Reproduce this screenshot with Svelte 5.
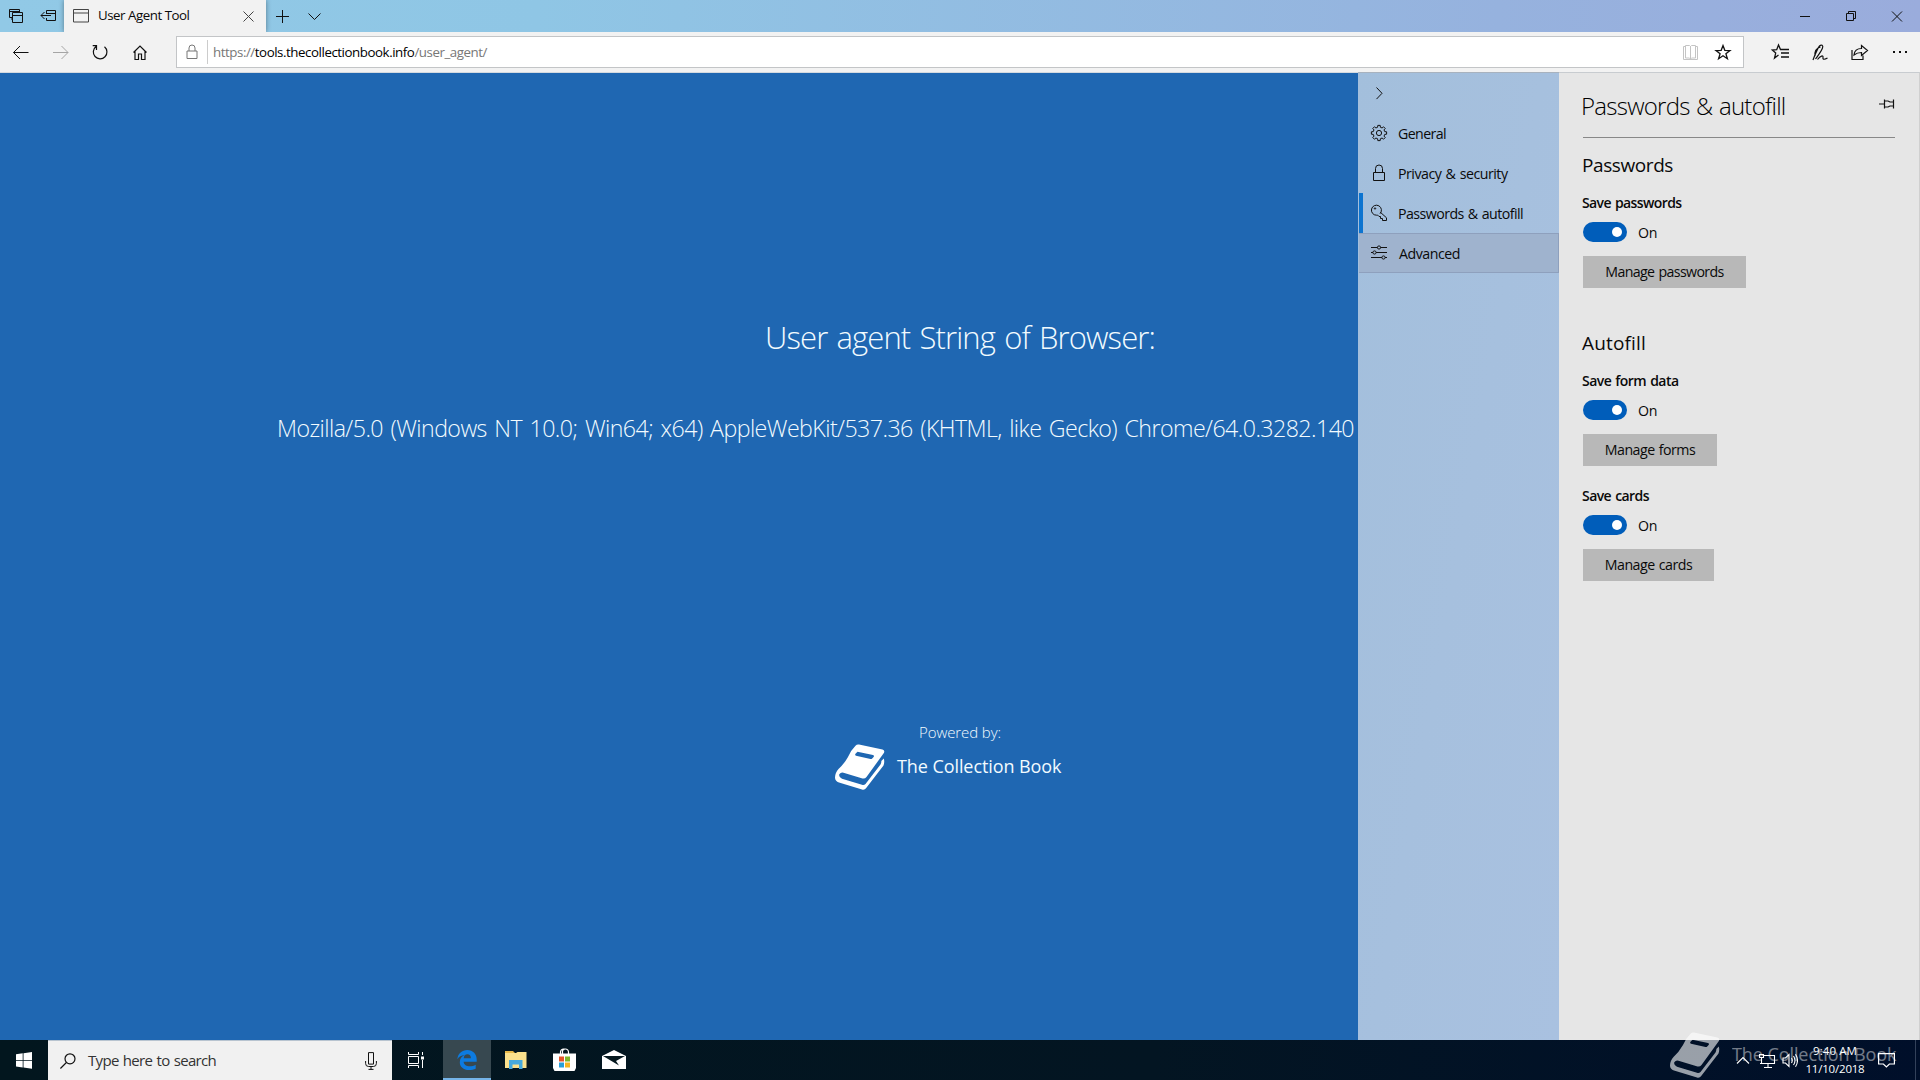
<script>
  // Spreads a label's letters so that it takes up a given advance width.
  function fit(node, width) {
    const natural = node.getBoundingClientRect().width;
    const count = Math.max(node.textContent.length, 1);
    node.style.letterSpacing = (width - natural) / count + 'px';
  }

  // Outline of a cog: teeth alternating between two radii.
  function cog(cx, cy, inner, outer, teeth) {
    const points = [];
    const step = (Math.PI * 2) / teeth;
    for (let i = 0; i < teeth; i++) {
      const a = i * step;
      for (const [offset, r] of [[-0.3, inner], [-0.2, outer], [0.2, outer], [0.3, inner]]) {
        const t = a + offset * step;
        points.push((cx + r * Math.cos(t)).toFixed(2) + ' ' + (cy + r * Math.sin(t)).toFixed(2));
      }
    }
    return 'M' + points.join('L') + 'Z';
  }
  const gear = cog(10, 10, 5.9, 7.7, 8);

  const nav = [
    { id: 'general', label: 'General', w: 48 },
    { id: 'privacy', label: 'Privacy & security', w: 109.5 },
    { id: 'passwords', label: 'Passwords & autofill', w: 125 },
    { id: 'advanced', label: 'Advanced', w: 61 }
  ];

  const settings = [
    { title: 'Passwords', tw: 91, items: [
      { label: 'Save passwords', lw: 99.5, button: 'Manage passwords', bw: 118.5, width: 'w1' }
    ] },
    { title: 'Autofill', tw: 64, items: [
      { label: 'Save form data', lw: 96.5, button: 'Manage forms', bw: 90.5, width: 'w2' },
      { label: 'Save cards', lw: 67, button: 'Manage cards', bw: 87.5, width: 'w3' }
    ] }
  ];
</script>

{#snippet book()}
  <svg class="book" viewBox="0 0 50 46">
    <path fill-rule="evenodd" d="M24 0.5 Q22 0 20.500 1.700 Q16 6 13 13 Q9 20 3.500 25 Q0 29 0 33.500 Q0 37 4 38.500 L27 45.500 Q29.500 46.300 31.200 44 L48.500 21.500 Q49.800 18 48.800 14.500 L46.300 17 Q46.500 18.500 45.500 20.500 L30.500 40 Q29 41.500 27 40.800 L7 34.700 Q3.500 33.500 4.300 30.200 Q6 28 8.500 28.800 L27.500 34.500 Q30 35 31.500 33 L48.500 9.500 Q50.500 6.500 47.500 5.500 Z M22.500 7.700 L38 11 Q39.600 11.500 38.600 12.900 L37.200 14.500 Q36.500 15.300 35.500 15 L21 11.800 Q19.600 11.200 20.500 9.800 Z" />
  </svg>
{/snippet}

<div class="screen">
  <header class="tabs">
    <svg width="64" height="32" viewBox="0 0 64 32" class="ln"><path d="M9.500 9.500h10v8h-10zM9.500 11.500h10M12 17.500v2.500h1" /><path class="front" d="M12.500 12.500h10v10h-10zM12.500 15.500h10" /><path d="M46.500 14v-3.500h9v10h-9v-2.500M46.500 13.500h9M41 15.500h10M44.500 12l-3.500 3.500 3.500 3.500" /></svg>
    <div class="tab">
      <svg width="16" height="14" viewBox="0 0 16 14" class="ln dim"><path d="M.5.500h15v12.500h-15zM.5 4h15" /></svg>
      <span class="t14" use:fit={91.5}>User Agent Tool</span>
      <svg width="11" height="11" viewBox="0 0 11 11" class="ln dim"><path d="M.5.500l10 10M10.500.500l-10 10" /></svg>
    </div>
    <svg width="60" height="32" viewBox="0 0 60 32" class="ln"><path d="M10 16.500h13M16.500 10v13M42.500 13.500l6 6 6-6" /></svg>
    <svg width="120" height="32" viewBox="0 0 120 32" class="ln windowbtns"><path d="M0 16.500h10M46.500 13.500h7v7h-7zM48.500 13.500v-2h7v7h-2M92 11.500l10 10M102 11.500l-10 10" /></svg>
  </header>

  <div class="toolbar">
    <svg width="176" height="40" viewBox="0 0 176 40" class="ln">
      <path d="M13.500 20.500h15M20 14l-6.500 6.500 6.500 6.500" />
      <path stroke="#a5a5a5" d="M53 20.500h15M61.500 14l6.500 6.500-6.500 6.500" />
      <path stroke-width="1.200" d="M96 14.600a6.800 6.800 0 1 0 8.500.2M96.500 18v-4.300h-3.800" />
      <path stroke-width="1.200" d="M133.500 20.500l6.500-6.500 6.500 6.500M135 19.500v8h3.500v-5.500h3v5.500h3.500v-8" />
    </svg>
    <div class="address">
      <svg width="12" height="16" viewBox="0 0 12 16" class="ln lock"><path d="M1 7h10v7.500h-10zM3 7v-3a3 3 0 0 1 6 0v3" /></svg>
      <i></i>
      <span class="url t14" use:fit={274}>https://<b>tools.thecollectionbook.info</b>/user_agent/</span>
      <svg width="60" height="30" viewBox="0 0 60 30" class="ln tools">
        <path stroke="#c4c4c4" d="M9.500 9.500h-2v13h14v-13h-2M9.500 8.500h4l1 1 1-1h4v12.500h-4l-1 1-1-1h-4zM14.500 9v13" />
        <path stroke-width="1.300" d="M47 8.500l1.800 4.800 5.200.2-4.100 3.200 1.500 5-4.400-3-4.400 3 1.500-5-4.100-3.200 5.200-.2z" />
      </svg>
    </div>
    <svg width="176" height="40" viewBox="0 0 176 40" class="ln">
      <path stroke-width="1.300" d="M39.500 17.500h-3l-2-4.500-1.800 4.700-4.400.4 3.400 3-1.200 5 4-3M37 21h8M37 25h8M39 17.500h6" />
      <path stroke-width="1.200" d="M69 28c2-5 4-11 6.500-14 2-2 4-.5 3 2-1.500 4-4.500 7.500-7 11M76.500 15c-4 1-6 4-5.500 9M73.500 27.500c3-4 6-4.500 5.500-2s2 2 4.500.500" />
      <path stroke-width="1.200" d="M108 18v9.500h11v-4M110 23c.5-5 4-6.500 7.500-6.500v-3l6 5-6 5v-3c-3 0-5 .5-7.500 2.500z" />
      <path stroke-width="2" d="M149 20h2M155 20h2M161 20h2" />
    </svg>
  </div>

  <main>
    <section class="page">
      <h1 use:fit={390}>User agent String of Browser:</h1>
      <p class="ua"><span use:fit={1077}>Mozilla/5.0 (Windows NT 10.0; Win64; x64) AppleWebKit/537.36 (KHTML, like Gecko) Chrome/64.0.3282.140</span></p>
      <p class="powered"><span use:fit={82}>Powered by:</span></p>
      <div class="brand">{@render book()}<span use:fit={164.5}>The Collection Book</span></div>
    </section>

    <nav>
      <div class="row"><svg width="20" height="20" viewBox="0 0 20 20" class="ln"><path d="M7.500 4.500l5.500 5.800-5.500 5.800" /></svg></div>
      {#each nav as n}
        <div class="row {n.id}">
          <svg width="20" height="20" viewBox="0 0 20 20" class="ln">
            {#if n.id === 'general'}
              <circle cx="10" cy="10" r="2.600" /><path d={gear} />
            {:else if n.id === 'privacy'}
              <path d="M4.500 9.500h11v8h-11zM6.500 9.500v-4a3.500 3.500 0 0 1 7 0v4" />
            {:else if n.id === 'passwords'}
              <circle cx="6" cy="5.500" r=".7" /><path d="M11 10.700a5 5 0 1 0-3.500 1.500l1-.2 1.500 1.500h1.500v2h2v2h4v-2.700l-6.200-5.600" />
            {:else}
              <path d="M2 4.500h6.500M11.500 4.500h6.500M2 9.500h2M7 9.500h11M2 14.500h11M16 14.500h2" /><circle cx="10" cy="4.500" r="1.600" /><circle cx="5.500" cy="9.500" r="1.600" /><circle cx="14.500" cy="14.500" r="1.600" />
            {/if}
          </svg>
          <span use:fit={n.w}>{n.label}</span>
        </div>
      {/each}
    </nav>

    <aside>
      <div class="title">
        <h2 use:fit={204.5}>Passwords &amp; autofill</h2>
        <svg width="16" height="12" viewBox="0 0 16 12" class="ln"><path stroke-width="1.200" d="M0 6h5M5.500 1.500v9M5.500 3h3.500l2 1h3.500M5.500 9h3.500l2-1h3.500M14.500 1.500v9" /></svg>
      </div>
      {#each settings as group}
        <div class="group">
          <h3 use:fit={group.tw}>{group.title}</h3>
          {#each group.items as item}
            <div class="item">
              <strong use:fit={item.lw}>{item.label}</strong>
              <div class="switch"><div class="toggle"></div><span use:fit={19}>On</span></div>
              <button class={item.width}><span use:fit={item.bw}>{item.button}</span></button>
            </div>
          {/each}
        </div>
      {/each}
    </aside>
  </main>

  <footer>
    <div class="start"><svg width="16" height="17" viewBox="0 0 16 17"><path fill="#fff" d="M0 2.300l6.700-1v6.700h-6.700zM7.500 1.200l8.500-1.200v8h-8.500zM0 8.800h6.700v6.700l-6.700-1zM7.500 8.800h8.500v8l-8.500-1.200z" /></svg></div>
    <div class="search">
      <svg width="16" height="16" viewBox="0 0 16 16" class="ln"><circle cx="10" cy="5.800" r="5" stroke-width="1.200" /><path stroke-width="1.200" d="M6.400 9.500l-6 6" /></svg>
      <span use:fit={128}>Type here to search</span>
      <svg width="12" height="18" viewBox="0 0 12 18" class="ln mic"><path d="M3.500.600h5v11.500h-5zM.6 9v2.500a3 3 0 0 0 3 3h4.800a3 3 0 0 0 3-3v-2.500M6 14.500v3M3.500 17.400h5" /></svg>
    </div>
    <div class="app tasks"><svg width="16" height="16" viewBox="0 0 16 16" class="ln white"><path d="M.5 0v2.500h10v-2.500M.5 4.500h10v7h-10zM.5 16v-2.500h10v2.500M14.500 0v3M14.500 8v8" /><path stroke-width="3" d="M14.500 4.500v3" /></svg></div>
    <div class="app active"><svg width="20" height="20" viewBox="0 0 20 20"><path fill="#0d7be0" d="M.3 9.200C1 3.500 5 0 10.200 0c6 0 9.500 4.300 9.500 9.500v2.200H6.600c.2 3.100 3 4.600 6.200 4.600 2 0 4.300-.6 5.900-1.600v4c-1.700.9-4.300 1.300-6.700 1.300-5.500 0-9.200-3.200-9.200-7.800 0-3.300 1.800-6 4.800-7.200C4.500 5.500 1.800 6.500.3 9.200zM6.700 8.200h7.200c0-2.600-1.300-3.900-3.500-3.900S6.900 5.900 6.700 8.200z" /></svg></div>
    <div class="app"><svg width="22" height="19" viewBox="0 0 22 19"><path fill="#e8b94a" d="M0 1h8l2 2h11v2h-21z" /><path fill="#fbe18d" d="M0 3h11l1.500-1h9v16h-21.500z" /><path fill="#46a9dc" d="M4 10h13.500v9h-3.500v-4.500h-6.500v4.500h-3.500z" /></svg></div>
    <div class="app"><svg width="23" height="23" viewBox="0 0 23 23"><path fill="none" stroke="#fff" stroke-width="1.200" d="M7.500 7v-3a3 3 0 0 1 3-3h2a3 3 0 0 1 3 3v3M9.500 6v-2a2 2 0 0 1 2-2.500" /><path fill="#fff" d="M0 5.500h23v14.500l-1.500 3h-20l-1.500-3z" /><path fill="#e4542b" d="M6 8.500h5v5h-5z" /><path fill="#7fb72b" d="M12 8.500h5v5h-5z" /><path fill="#2a9fd8" d="M6 14.500h5v5h-5z" /><path fill="#f6b51e" d="M12 14.500h5v5h-5z" /></svg></div>
    <div class="app"><svg width="24" height="19" viewBox="0 0 24 19"><path fill="#fff" d="M0 6l12-6 12 6v13h-24z" /><path fill="#06181f" d="M1 6h22l-9 5 3 4.500z" /></svg></div>
    <div class="tray">
      <svg width="62" height="20" viewBox="0 0 62 20" class="ln white"><path stroke-width="1.100" d="M1 13.500l6-6 6 6M26.500 5.500h12v8h-14.500M23.500 4.500h4v3h-4zM25.500 8v6M32 14v3M28 17.500h8M47 8v5h2.500l3.500 3.500v-12l-3.500 3.500zM55.500 8q1.500 2.500 0 5M57.500 6q3 4.500 0 9M59.500 4.200q4 6.300 0 12.600" /></svg>
      <div class="clock"><span use:fit={44}>9:40 AM</span><span use:fit={59}>11/10/2018</span></div>
      <svg width="17" height="18" viewBox="0 0 17 18" class="ln white"><path stroke-width="1.200" d="M.6 2.600h15.800v10.400h-5l-3 3-3-3h-4.800z" /></svg>
    </div>
  </footer>
  <div class="watermark">{@render book()}<span use:fit={164.5}>The Collection Book</span></div>
</div>

<style>
  :global(body) { margin: 0; overflow: hidden; }
  .screen { position: relative; width: 1920px; height: 1080px; overflow: hidden; display: flex; flex-direction: column; font-family: "Open Sans", "Noto Sans", sans-serif; font-size: 14.200px; color: #0a0a0a; }
  .screen :global(*) { box-sizing: border-box; }
  svg { flex: none; display: block; }
  span, h1, h2, h3, strong { white-space: nowrap; margin: 0; }
  span, strong { display: inline-block; }
  .ln { fill: none; stroke: #111; stroke-width: 1; }
  .dim { stroke: #444; }
  .white { stroke: #fff; }
  .front { fill: #91c9e6; }
  .t14 { font-size: 13.300px; }
  .tabs { height: 32px; flex: none; display: flex; background: linear-gradient(90deg, #91c9e6 0, #8fc6e5 28%, #96b2de 78%, #9aacdc 100%); }
  .tab { width: 202px; display: flex; align-items: center; background: #f2f2f2; padding: 0 12px 0 9px; box-shadow: 0 0 5px #0006; clip-path: inset(0 -6px 0 -6px); line-height: 30px; }
  .tab span { margin: -2px auto 0 9px; }
  .windowbtns { margin-left: auto; }
  .toolbar { height: 40px; flex: none; display: flex; background: #f2f2f2; }
  .address { width: 1568px; height: 32px; margin-top: 4px; border: 1px solid #c3c5c7; background: #fff; display: flex; align-items: center; padding-left: 9px; line-height: 30px; }
  .address i { width: 1px; height: 24px; background: #ccc; margin: 0 5px 0 9px; }
  .lock { stroke: #777; }
  .url { color: #777; }
  .url b { font-weight: 400; color: #000; }
  .tools { margin-left: auto; margin-right: 7px; }
  main { flex: 1; display: flex; background: #1f67b2; min-height: 0; }
  .page { width: 1358px; padding-top: 240px; color: #f2fbff; border-top: 1px solid #d5dae0; }
  h1 { font-weight: 300; font-size: 31px; line-height: 48px; width: max-content; margin-left: 765px; word-spacing: 2px; }
  p { margin: 0; }
  .ua { margin-top: 45px; padding-left: 277px; font-weight: 300; font-size: 23.200px; line-height: 44px; word-spacing: 2px; }
  .powered { margin-top: 267px; padding-left: 919px; font-weight: 300; font-size: 15px; line-height: 30px; }
  .brand { display: flex; gap: 12px; padding-left: 835px; height: 46px; margin-top: -3px; font-size: 18px; line-height: 44px; }
  .book { width: 50px; height: 46px; fill: #fff; }
  nav { width: 201px; background: linear-gradient(100deg, #a3bfdc, #a9c1e0); border-top: 1px solid #a8b2be; }
  .row { height: 40px; margin-left: 1px; padding-left: 10px; display: flex; align-items: center; }
  .row span { margin-left: 9px; line-height: 38px; padding-top: 1px; word-spacing: 1px; }
  .passwords { border-left: 4px solid #0c74d0; padding-left: 6px; }
  .advanced { background: #9fb3ce; border: 1px solid #8ea0bd; border-left: 0; }
  .advanced span { margin-left: 10px; }
  aside { flex: 1; background: #e6e6e6; border-top: 1px solid #c8ccd0; border-right: 1px solid #d0d0d0; padding: 0 24px 0 24px; }
  .title { height: 65px; display: flex; align-items: flex-start; justify-content: space-between; border-bottom: 1px solid #888; }
  .title h2 { font-weight: 300; font-size: 24px; line-height: 40px; margin: 13px 0 0 -2px; color: #000; word-spacing: 1px; }
  .title svg { margin-top: 25px; }
  .group { padding-bottom: 40px; height: 178px; }
  h3 { font-weight: 400; font-size: 19px; line-height: 30px; padding-top: 12px; margin-left: -1px; width: max-content; }
  .item { height: 115px; padding-top: 10px; }
  .item strong { display: block; width: max-content; font-weight: 600; font-size: 14px; line-height: 26px; margin-left: -1px; word-spacing: 1px; }
  .switch { display: flex; align-items: center; height: 20px; margin-top: 6px; gap: 11px; }
  .toggle { width: 44px; height: 20px; border-radius: 10px; background: #005dba; padding: 5px 5px 5px 29px; }
  .toggle::before { content: ''; display: block; width: 10px; height: 10px; border-radius: 5px; background: #fff; }
  .switch span { line-height: 20px; padding-top: 2px; }
  button { display: block; height: 32px; margin-top: 14px; border: 0; background: #b8b8b8; padding: 0 0 2px; font: inherit; color: #0a0a0a; word-spacing: 1px; }
  .w1 { width: 163px; }
  .w2 { width: 134px; }
  .w3 { width: 131px; }
  footer { height: 40px; flex: none; display: flex; background: linear-gradient(90deg, #02161e, #031522 60%, #000f2a); }
  footer > div { display: flex; align-items: center; }
  .start { width: 48px; justify-content: center; }
  .search { width: 344px; background: #f1f1f1; border-top: 1px solid #b8c4d0; padding-left: 12px; line-height: 36px; font-size: 15px; color: #333; }
  .search span { margin-left: 12px; padding-bottom: 2px; word-spacing: 1px; }
  .mic { margin-left: auto; margin-right: 15px; }
  .app { width: 49px; justify-content: center; padding-bottom: 1px; }
  .tasks { margin-right: 2px; padding-right: 2px; }
  .active { width: 48px; background: #374850; border-bottom: 2px solid #76b4e8; padding: 1px 0 0; }
  .tray { margin-left: auto; width: 184px; padding-right: 4px; }
  .tray::after { content: ''; width: 1px; height: 40px; margin-left: auto; background: #33415a; }
  .clock { width: 74px; display: flex; flex-direction: column; align-items: center; font-size: 11.500px; line-height: 18px; color: #fff; margin-right: 6px; }
  .watermark { position: absolute; left: 1670px; top: 1032px; display: flex; gap: 12px; opacity: .6; color: #fff; font-size: 18px; line-height: 44px; }
  .watermark span { opacity: .75; }
</style>
